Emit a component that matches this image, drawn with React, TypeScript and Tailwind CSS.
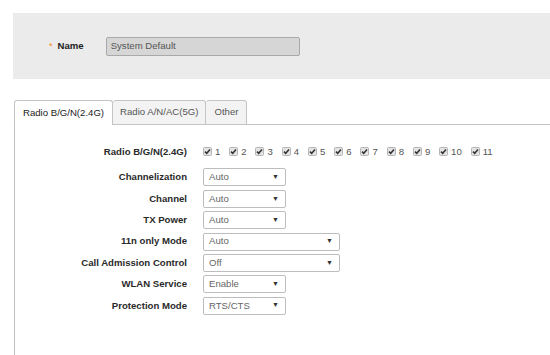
const FONT = "font-['Liberation_Sans',Arial,sans-serif]"

const CHANNELS = ['1', '2', '3', '4', '5', '6', '7', '8', '9', '10', '11']

const ROWS: { label: string; value: string; wide?: boolean }[] = [
  { label: 'Channelization', value: 'Auto' },
  { label: 'Channel', value: 'Auto' },
  { label: 'TX Power', value: 'Auto' },
  { label: '11n only Mode', value: 'Auto', wide: true },
  { label: 'Call Admission Control', value: 'Off', wide: true },
  { label: 'WLAN Service', value: 'Enable' },
  { label: 'Protection Mode', value: 'RTS/CTS' },
]

function CheckBox() {
  return (
    <svg width="9" height="9" viewBox="0 0 9 9" className="shrink-0">
      <rect x="0.5" y="0.5" width="8" height="8" rx="1" fill="#e4e4e4" stroke="#b5b5b5" />
      <path d="M2 4.6 L3.7 6.3 L7 2.4" fill="none" stroke="#333" strokeWidth="1.5" />
    </svg>
  )
}

function Select({ value, wide }: { value: string; wide?: boolean }) {
  return (
    <div
      className={`flex h-[18px] items-center justify-between rounded-[2px] border border-[#bdbdbd] bg-white pl-[5px] pr-[6px] text-[#666] ${
        wide ? 'w-[137px]' : 'w-[83px]'
      }`}
    >
      <span>{value}</span>
      <span className="text-[7px] text-[#333]">▼</span>
    </div>
  )
}

function Label({ children }: { children: string }) {
  return (
    <div className="w-[172px] shrink-0 text-right font-bold text-[#2a2a2a]">{children}</div>
  )
}

export default function App() {
  return (
    <div className={`h-[355px] w-[550px] overflow-hidden bg-white text-[9.6px] ${FONT}`}>
      <div className="ml-[13px] mt-[13px] flex h-[66px] items-center bg-[#ebebeb]">
        <span className="ml-[36px] text-[9px] leading-none text-[#f08a24]">*</span>
        <span className="ml-[5px] font-bold text-[#222]">Name</span>
        <div className="ml-[22px] flex h-[19px] w-[194px] items-center rounded-[2px] border border-[#a9a9a9] bg-[#d6d6d6] pl-[4px] text-[#555]">
          System Default
        </div>
      </div>

      <div className="ml-[14px] mt-[21px]">
        <div className="flex h-[25px] items-end">
          <div className="flex h-[25px] items-center rounded-t-[3px] border border-b-0 border-[#c4c4c4] bg-white px-[8px] text-[#222]">
            Radio B/G/N(2.4G)
          </div>
          <div className="flex h-[25px] items-center rounded-t-[3px] border border-l-0 border-[#c4c4c4] bg-[#f3f3f3] px-[7px] text-[#555]">
            Radio A/N/AC(5G)
          </div>
          <div className="flex h-[25px] items-center rounded-t-[3px] border border-l-0 border-[#c4c4c4] bg-[#f3f3f3] px-[8px] text-[#555]">
            Other
          </div>
          <div className="flex-1 border-b border-[#c4c4c4]" />
        </div>

        <div className="flex h-[230px] flex-col gap-[3.4px] border-l border-[#c0c0c0] pt-[18px]">
          <div className="mb-[4px] flex h-[18px] items-center gap-[16px]">
            <Label>Radio B/G/N(2.4G)</Label>
            <div className="flex items-center text-[#555]">
              {CHANNELS.map((c) => (
                <div key={c} className="mr-[8.9px] flex items-center gap-[3px]">
                  <CheckBox />
                  <span>{c}</span>
                </div>
              ))}
            </div>
          </div>
          {ROWS.map((r) => (
            <div key={r.label} className="flex h-[18px] items-center gap-[16px]">
              <Label>{r.label}</Label>
              <Select value={r.value} wide={r.wide} />
            </div>
          ))}
        </div>
      </div>
    </div>
  )
}
